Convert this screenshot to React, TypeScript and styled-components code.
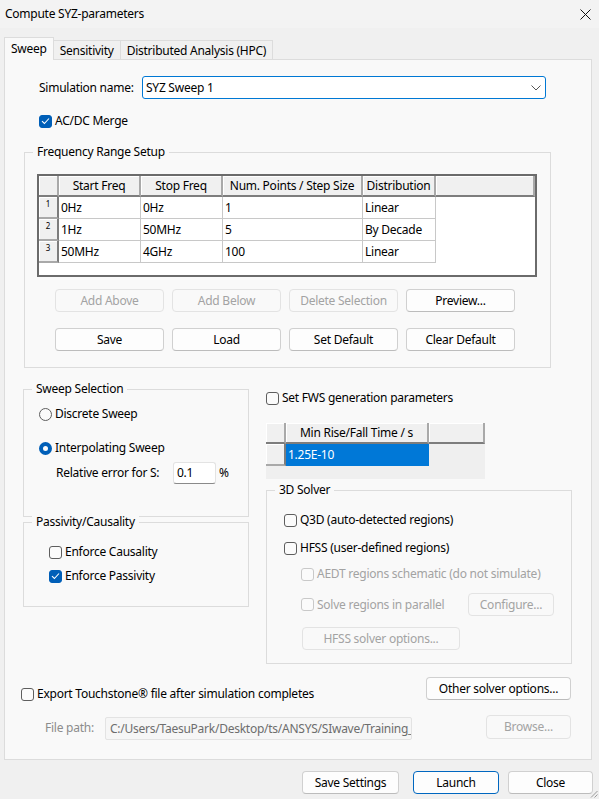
import React from 'react';
import styled, { createGlobalStyle } from 'styled-components';

const GlobalStyle = createGlobalStyle`
  html, body {
    margin: 0;
    padding: 0;
  }
  body {
    background: #f0f0f0;
    font-family: "Noto Sans", "Noto Sans CJK KR", sans-serif;
    font-size: 12px;
    letter-spacing: -0.25px;
    color: #000;
  }
  * {
    box-sizing: border-box;
  }
`;

const Window = styled.div`
  width: 599px;
  height: 799px;
  position: relative;
  overflow: hidden;
  display: flex;
  flex-direction: column;
  background: #f0f0f0;
`;

const TitleBar = styled.div`
  height: 28px;
  flex: none;
  background: #f3f3f3;
  display: flex;
  align-items: center;
  justify-content: space-between;
  padding: 0 8px 0 5px;
  line-height: 16px;
`;

const TabBar = styled.div`
  display: flex;
  align-items: flex-end;
  height: 23px;
  margin-top: 9px;
  padding-left: 4px;
  position: relative;
  z-index: 1;
  margin-bottom: -1px;
`;

const Tab = styled.div<{ $active?: boolean }>`
  height: ${(p) => (p.$active ? '23px' : '20px')};
  padding: 0 6px;
  display: flex;
  align-items: center;
  line-height: 16px;
  background: ${(p) => (p.$active ? '#f9f9f9' : '#f0f0f0')};
  border: 1px solid #dcdcdc;
  border-bottom: ${(p) => (p.$active ? 'none' : '1px solid #dcdcdc')};
  margin-left: ${(p) => (p.$active ? '0' : '-1px')};
  padding-top: ${(p) => (p.$active ? '0' : '1px')};
`;

const Panel = styled.div`
  margin: 0 7px 0 4px;
  height: 701px;
  flex: none;
  background: #f9f9f9;
  border: 1px solid #dcdcdc;
  display: flex;
  flex-direction: column;
`;

const Row = styled.div<{ $top?: number; $left?: number; $h?: number }>`
  display: flex;
  align-items: center;
  line-height: 16px;
  margin-top: ${(p) => p.$top ?? 0}px;
  padding-left: ${(p) => p.$left ?? 0}px;
  height: ${(p) => (p.$h ? `${p.$h}px` : 'auto')};
`;

const FieldLabel = styled.span<{ $w: number; $muted?: boolean }>`
  width: ${(p) => p.$w}px;
  flex: none;
  color: ${(p) => (p.$muted ? '#8c8c8c' : '#000')};
`;

const Combo = styled.div`
  width: 404px;
  height: 23px;
  background: #fff;
  border: 1px solid #0078d4;
  border-radius: 3px;
  display: flex;
  align-items: center;
  justify-content: space-between;
  padding: 0 4px 0 3px;
`;

const Group = styled.div<{ $top?: number; $left?: number; $w?: number }>`
  border: 1px solid #dcdcdc;
  margin-top: ${(p) => p.$top ?? 0}px;
  margin-left: ${(p) => p.$left ?? 0}px;
  width: ${(p) => (p.$w ? `${p.$w}px` : 'auto')};
`;

const GroupTitle = styled.div`
  margin: -9px 0 0 8px;
  padding: 0 4px;
  width: fit-content;
  line-height: 16px;
  background: #f9f9f9;
`;

const GroupBody = styled.div<{ $pad: string }>`
  padding: ${(p) => p.$pad};
  display: flex;
  flex-direction: column;
`;

const TableFrame = styled.div`
  width: 500px;
  height: 103px;
  border: 2px solid #6b6b6b;
  background: #fff;
`;

const Grid = styled.div<{ $cols: string }>`
  display: grid;
  grid-template-columns: ${(p) => p.$cols};
  grid-template-rows: 21px;
  grid-auto-rows: 22px;
  line-height: 16px;
`;

const HeadCell = styled.div`
  background: #f0f0f0;
  border-right: 2px solid #a9a9a9;
  border-bottom: 2px solid #7d7d7d;
  box-shadow: inset 1px 1px 0 #fff;
  display: flex;
  align-items: center;
  justify-content: center;
  white-space: nowrap;
  overflow: hidden;
`;

const RowHead = styled.div`
  background: #f0f0f0;
  border-right: 2px solid #7d7d7d;
  border-bottom: 2px solid #a9a9a9;
  box-shadow: inset 1px 1px 0 #fff;
  font-size: 8px;
  line-height: 10px;
  text-align: center;
  padding-top: 2px;
`;

const Cell = styled.div<{ $selected?: boolean; $blank?: boolean; $fill?: string }>`
  background: ${(p) => (p.$selected ? '#0078d7' : p.$fill ?? '#fff')};
  color: ${(p) => (p.$selected ? '#fff' : '#000')};
  border-right: ${(p) => (p.$blank || p.$selected ? 'none' : '1px solid #c8c8c8')};
  border-bottom: ${(p) => (p.$blank || p.$selected ? 'none' : '1px solid #c8c8c8')};
  padding-left: 2px;
  display: flex;
  align-items: center;
  white-space: nowrap;
  overflow: hidden;
`;

const ButtonGrid = styled.div`
  display: grid;
  grid-template-columns: repeat(4, 109px);
  grid-auto-rows: 23px;
  column-gap: 8px;
  row-gap: 16px;
  margin-top: 12px;
  padding-left: 18px;
`;

const Button = styled.button<{ $w?: number; $h?: number; $primary?: boolean }>`
  width: ${(p) => (p.$w ? `${p.$w}px` : 'auto')};
  height: ${(p) => p.$h ?? 23}px;
  flex: none;
  font: inherit;
  letter-spacing: inherit;
  line-height: 16px;
  padding: 0;
  color: #000;
  background: #fdfdfd;
  border: 1px solid ${(p) => (p.$primary ? '#0067c0' : '#d0d0d0')};
  border-bottom-color: ${(p) => (p.$primary ? '#0067c0' : '#bcbcbc')};
  border-radius: 4px;

  &:disabled {
    color: #a3a3a3;
    background: #f9f9f9;
    border-color: #e3e3e3;
  }
`;

const LowerGrid = styled.div`
  display: grid;
  grid-template-columns: 226px 306px;
  column-gap: 17px;
  align-items: start;
  margin-top: 21px;
  margin-left: 18px;
`;

const Column = styled.div`
  display: flex;
  flex-direction: column;
`;

const CheckLabel = styled.div<{ $top?: number; $disabled?: boolean }>`
  display: flex;
  align-items: center;
  gap: 3px;
  height: 16px;
  line-height: 16px;
  margin-top: ${(p) => p.$top ?? 0}px;
  color: ${(p) => (p.$disabled ? '#a3a3a3' : '#000')};
  white-space: nowrap;
`;

const Box = styled.span<{ $checked?: boolean; $disabled?: boolean }>`
  width: 13px;
  height: 13px;
  flex: none;
  border-radius: 3px;
  border: 1px solid
    ${(p) => (p.$checked ? '#005fb8' : p.$disabled ? '#c9c9c9' : '#5e5e5e')};
  background: ${(p) => (p.$checked ? '#005fb8' : '#fbfbfb')};
  display: flex;
  align-items: center;
  justify-content: center;
`;

const RadioDot = styled.span<{ $checked?: boolean }>`
  width: 13px;
  height: 13px;
  flex: none;
  border-radius: 50%;
  border: ${(p) => (p.$checked ? '4px solid #005fb8' : '1px solid #5e5e5e')};
  background: #fbfbfb;
`;

const SmallInput = styled.div`
  width: 43px;
  height: 22px;
  background: #fff;
  border: 1px solid #e3e3e3;
  border-bottom-color: #8a8a8a;
  border-radius: 3px;
  padding-left: 3px;
  display: flex;
  align-items: center;
  margin-right: 3px;
`;

const PathInput = styled.div`
  width: 307px;
  height: 23px;
  margin-top: 2px;
  background: #f6f6f6;
  border: 1px solid #e3e3e3;
  border-radius: 2px;
  padding-left: 4px;
  color: #6d6d6d;
  display: flex;
  align-items: center;
  white-space: nowrap;
  overflow: hidden;
`;

const SplitRow = styled.div<{ $top: number }>`
  display: flex;
  align-items: flex-start;
  justify-content: space-between;
  margin-top: ${(p) => p.$top}px;
  padding: 0 20px 0 16px;
`;

const FwsTable = styled.div`
  width: 219px;
  height: 56px;
  margin-top: 17px;
  background: #efefef;
`;

const Footer = styled.div`
  display: flex;
  justify-content: flex-end;
  padding: 11px 6px 0 0;
`;

const Grip = styled.svg`
  position: absolute;
  right: 1px;
  bottom: 1px;
`;

const Check = () => (
  <svg width="9" height="8" viewBox="0 0 9 8">
    <path d="M1 4.2 L3.4 6.5 L8 1.5" fill="none" stroke="#fff" strokeWidth="1.1" />
  </svg>
);

interface CheckProps {
  label: string;
  checked?: boolean;
  disabled?: boolean;
  top?: number;
}

const CheckBox: React.FC<CheckProps> = ({ label, checked, disabled, top }) => (
  <CheckLabel $top={top} $disabled={disabled}>
    <Box $checked={checked} $disabled={disabled}>
      {checked && <Check />}
    </Box>
    {label}
  </CheckLabel>
);

const Radio: React.FC<{ label: string; checked?: boolean; top?: number }> = ({
  label,
  checked,
  top,
}) => (
  <CheckLabel $top={top}>
    <RadioDot $checked={checked} />
    {label}
  </CheckLabel>
);

const rows = [
  ['0Hz', '0Hz', '1', 'Linear'],
  ['1Hz', '50MHz', '5', 'By Decade'],
  ['50MHz', '4GHz', '100', 'Linear'],
];

export default function App() {
  return (
    <Window>
      <GlobalStyle />
      <TitleBar>
        <span>Compute SYZ-parameters</span>
        <svg width="11" height="11" viewBox="0 0 11 11">
          <path d="M0.5 0.5 L10.5 10.5 M10.5 0.5 L0.5 10.5" stroke="#111" strokeWidth="1" />
        </svg>
      </TitleBar>

      <TabBar>
        <Tab $active>Sweep</Tab>
        <Tab>Sensitivity</Tab>
        <Tab>Distributed Analysis (HPC)</Tab>
      </TabBar>

      <Panel>
        <Row $top={16} $left={34} $h={23}>
          <FieldLabel $w={103}>Simulation name:</FieldLabel>
          <Combo>
            <span>SYZ Sweep 1</span>
            <svg width="10" height="6" viewBox="0 0 10 6">
              <path d="M0.5 0.5 L5 5 L9.5 0.5" fill="none" stroke="#555" strokeWidth="1" />
            </svg>
          </Combo>
        </Row>

        <Row $top={14} $left={34}>
          <CheckBox label="AC/DC Merge" checked />
        </Row>

        <Group $top={23} $left={19} $w={527}>
          <GroupTitle>Frequency Range Setup</GroupTitle>
          <GroupBody $pad="14px 12px 16px 12px">
            <TableFrame>
              <Grid $cols="20px 82px 82px 140px 73px 1fr">
                <HeadCell />
                <HeadCell>Start Freq</HeadCell>
                <HeadCell>Stop Freq</HeadCell>
                <HeadCell>Num. Points / Step Size</HeadCell>
                <HeadCell>Distribution</HeadCell>
                <HeadCell />
                {rows.map((r, i) => (
                  <React.Fragment key={i}>
                    <RowHead>{i + 1}</RowHead>
                    {r.map((v, j) => (
                      <Cell key={j}>{v}</Cell>
                    ))}
                    <Cell $blank />
                  </React.Fragment>
                ))}
              </Grid>
            </TableFrame>
            <ButtonGrid>
              <Button disabled>Add Above</Button>
              <Button disabled>Add Below</Button>
              <Button disabled>Delete Selection</Button>
              <Button>Preview...</Button>
              <Button>Save</Button>
              <Button>Load</Button>
              <Button>Set Default</Button>
              <Button>Clear Default</Button>
            </ButtonGrid>
          </GroupBody>
        </Group>

        <LowerGrid>
          <Column>
            <Group>
              <GroupTitle>Sweep Selection</GroupTitle>
              <GroupBody $pad="9px 0 32px 15px">
                <Radio label="Discrete Sweep" />
                <Radio label="Interpolating Sweep" checked top={18} />
                <Row $top={6} $left={17} $h={22}>
                  <FieldLabel $w={117}>Relative error for S:</FieldLabel>
                  <SmallInput>0.1</SmallInput>
                  <span>%</span>
                </Row>
              </GroupBody>
            </Group>
            <Group $top={5}>
              <GroupTitle>Passivity/Causality</GroupTitle>
              <GroupBody $pad="14px 0 22px 25px">
                <CheckBox label="Enforce Causality" />
                <CheckBox label="Enforce Passivity" checked top={8} />
              </GroupBody>
            </Group>
          </Column>

          <Column>
            <CheckBox label="Set FWS generation parameters" top={1} />
            <FwsTable>
              <Grid $cols="20px 143px 1fr">
                <HeadCell />
                <HeadCell>Min Rise/Fall Time / s</HeadCell>
                <HeadCell />
                <RowHead />
                <Cell $selected>1.25E-10</Cell>
                <Cell $blank $fill="#efefef" />
              </Grid>
            </FwsTable>
            <Group $top={11}>
              <GroupTitle>3D Solver</GroupTitle>
              <GroupBody $pad="14px 17px 13px 17px">
                <CheckBox label="Q3D (auto-detected regions)" />
                <CheckBox label="HFSS (user-defined regions)" top={12} />
                <Row $top={10} $left={17}>
                  <CheckBox label="AEDT regions schematic (do not simulate)" disabled />
                </Row>
                <Row $top={11} $left={17} $h={23}>
                  <CheckBox label="Solve regions in parallel" disabled />
                  <Button disabled $w={86} style={{ marginLeft: 'auto' }}>
                    Configure...
                  </Button>
                </Row>
                <Row $top={11} $left={18}>
                  <Button disabled $w={158}>
                    HFSS solver options...
                  </Button>
                </Row>
              </GroupBody>
            </Group>
          </Column>
        </LowerGrid>

        <SplitRow $top={13}>
          <CheckBox label="Export Touchstone® file after simulation completes" top={9} />
          <Button $w={145}>Other solver options...</Button>
        </SplitRow>

        <SplitRow $top={13}>
          <Row $left={24} $h={25}>
            <FieldLabel $w={60} $muted>
              File path:
            </FieldLabel>
            <PathInput>C:/Users/TaesuPark/Desktop/ts/ANSYS/SIwave/Training_</PathInput>
          </Row>
          <Button disabled $w={85} $h={24}>
            Browse...
          </Button>
        </SplitRow>
      </Panel>

      <Footer>
        <Button $w={97}>Save Settings</Button>
        <Button $w={86} $primary style={{ marginLeft: 14 }}>
          Launch
        </Button>
        <Button $w={85} style={{ marginLeft: 9 }}>
          Close
        </Button>
      </Footer>

      <Grip width="9" height="9" viewBox="0 0 9 9">
        <path d="M8.5 2 L2 8.5 M8.5 5.5 L5.5 8.5" stroke="#9a9a9a" strokeWidth="1" />
      </Grip>
    </Window>
  );
}
